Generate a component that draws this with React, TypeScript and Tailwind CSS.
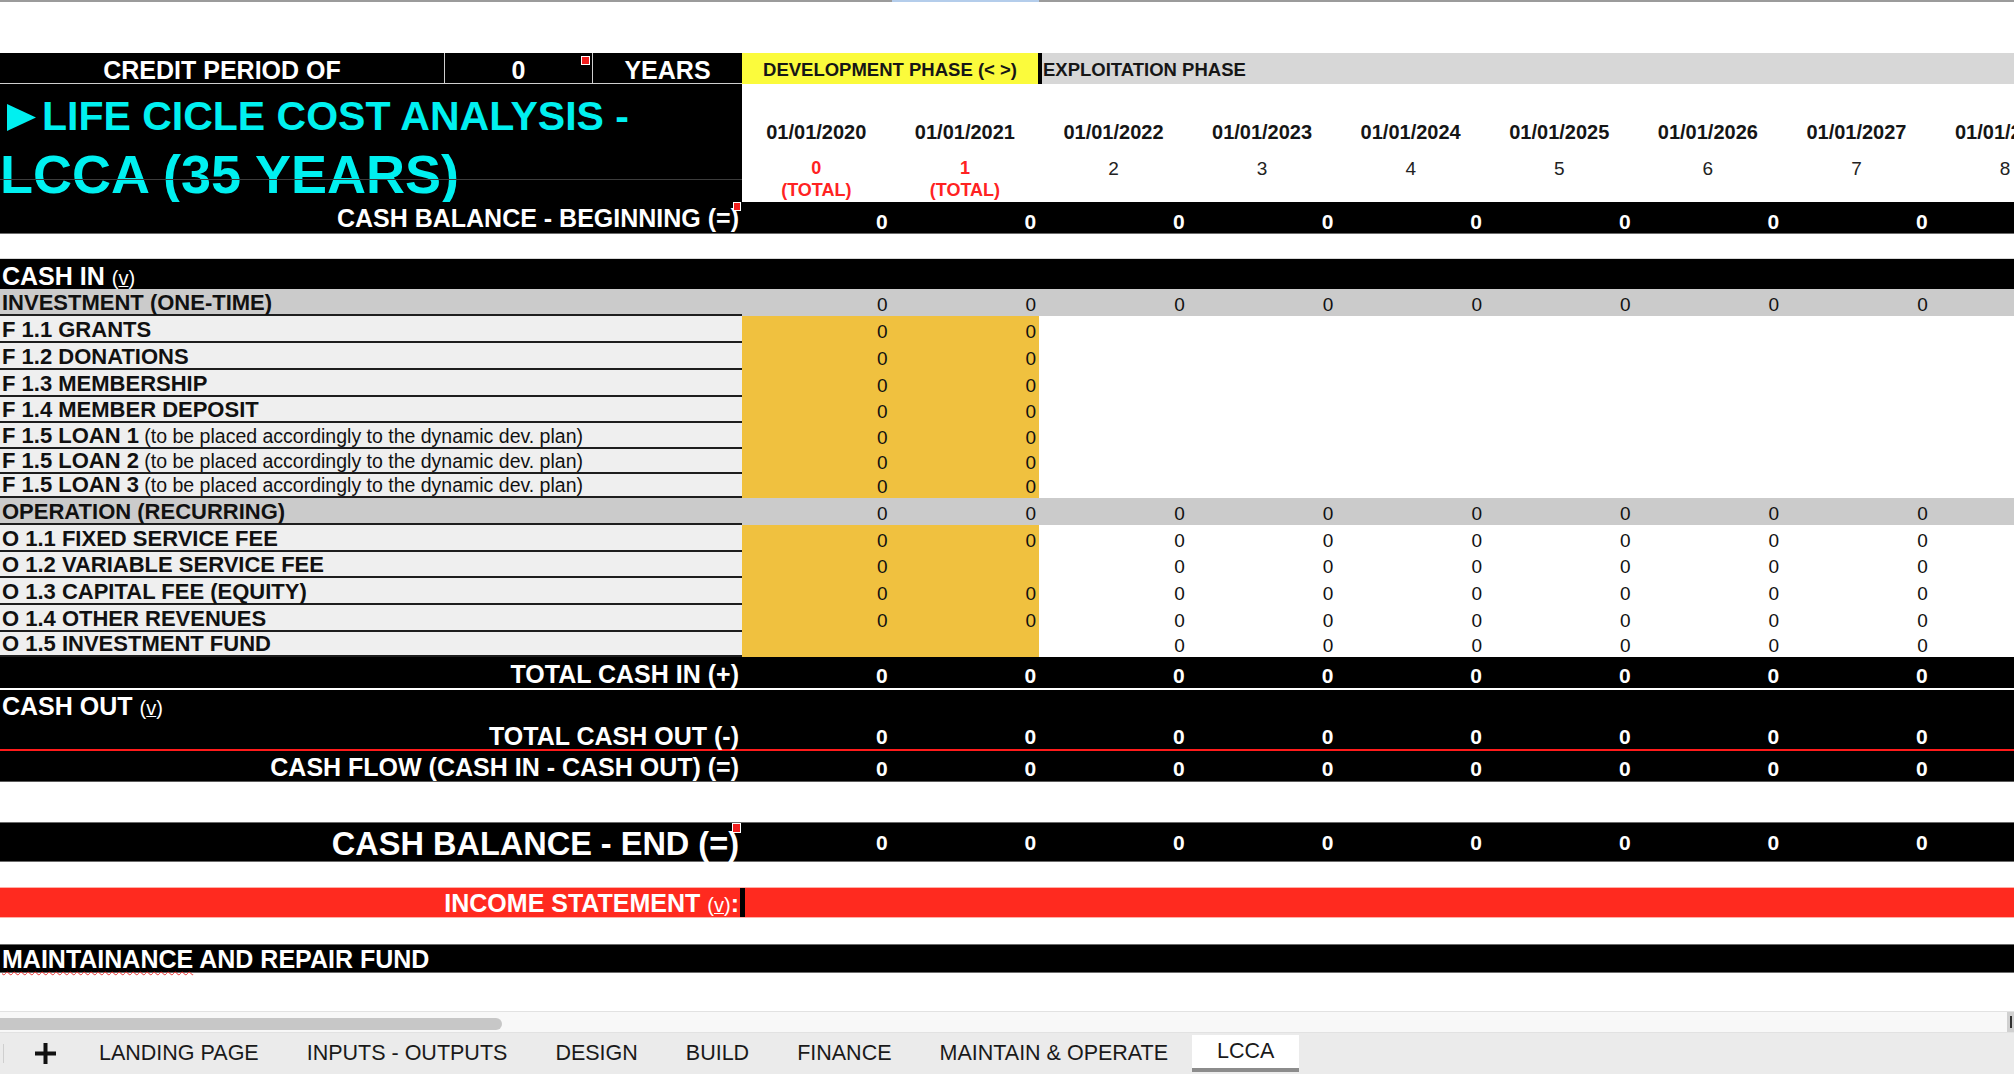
import React from 'react';
import clsx from 'clsx';

type Cell = string | null;

const dates = [
  '01/01/2020',
  '01/01/2021',
  '01/01/2022',
  '01/01/2023',
  '01/01/2024',
  '01/01/2025',
  '01/01/2026',
  '01/01/2027',
  '01/01/2028',
];

const all = (v: Cell): Cell[] => Array(9).fill(v);
const ZEROS = all('0');

const fundingRows: { label: string; note?: boolean; h: string }[] = [
  { label: 'F 1.1 GRANTS', h: 'h-[27px]' },
  { label: 'F 1.2 DONATIONS', h: 'h-[27px]' },
  { label: 'F 1.3 MEMBERSHIP', h: 'h-[27px]' },
  { label: 'F 1.4 MEMBER DEPOSIT', h: 'h-[26px]' },
  { label: 'F 1.5 LOAN 1', note: true, h: 'h-[26px]' },
  { label: 'F 1.5 LOAN 2', note: true, h: 'h-[25px]' },
  { label: 'F 1.5 LOAN 3', note: true, h: 'h-[24px]' },
];

const operationRows: { label: string; values: Cell[]; h: string }[] = [
  { label: 'O 1.1 FIXED SERVICE FEE', values: ZEROS, h: 'h-[27px]' },
  { label: 'O 1.2 VARIABLE SERVICE FEE', values: ['0', null, ...all('0').slice(2)], h: 'h-[26px]' },
  { label: 'O 1.3 CAPITAL FEE (EQUITY)', values: ZEROS, h: 'h-[27px]' },
  { label: 'O 1.4 OTHER REVENUES', values: ZEROS, h: 'h-[27px]' },
  { label: 'O 1.5 INVESTMENT FUND', values: [null, null, ...all('0').slice(2)], h: 'h-[25px]' },
];

const tabs = ['LANDING PAGE', 'INPUTS - OUTPUTS', 'DESIGN', 'BUILD', 'FINANCE', 'MAINTAIN & OPERATE'];

function Marker({ className }: { className: string }) {
  return <span className={clsx('absolute bg-[#f01d1d] ring-1 ring-white', className)} />;
}

function Toggle() {
  return (
    <span className="ml-[7px] text-[20px] font-normal">
      (<span className="underline decoration-1 underline-offset-[1px]">v</span>)
    </span>
  );
}

// white bold values inside the black summary rows
function DarkValues({ pb }: { pb: string }) {
  return (
    <>
      {ZEROS.map((v, i) => (
        <div key={i} className={clsx('w-[148.6px] shrink-0 pr-[3px] text-right text-[21px] font-bold leading-none', pb)}>
          {v}
        </div>
      ))}
    </>
  );
}

function LightRow({
  label,
  values,
  h,
  gold,
  gray,
  note,
}: {
  label: string;
  values: Cell[];
  h: string;
  gold?: boolean;
  gray?: boolean;
  note?: boolean;
}) {
  return (
    <div className={clsx('flex text-[#111]', h, gray && 'bg-[#cbcbcb]')}>
      <div
        className={clsx(
          'flex w-[742px] shrink-0 items-end border-b-2 border-[#1e1e1e] pl-[2px] leading-none',
          !gray && 'bg-[#efefef]'
        )}
      >
        <span className="text-[22px] font-bold">
          {label}
          {note && (
            <span className="text-[19.5px] font-normal"> (to be placed accordingly to the dynamic dev. plan)</span>
          )}
        </span>
      </div>
      {values.map((v, i) => (
        <div
          key={i}
          className={clsx(
            'flex w-[148.6px] shrink-0 items-end justify-end pb-[2px] pr-[3px] text-[19px] leading-none',
            gold && i < 2 && 'bg-[#f0c13f]'
          )}
        >
          {v}
        </div>
      ))}
    </div>
  );
}

export default function App() {
  return (
    <div className="flex h-[1074px] w-[2014px] flex-col overflow-hidden bg-white font-['Liberation_Sans',Arial,sans-serif]">
      {/* top edge of the window */}
      <div className="flex h-[2px] shrink-0">
        <div className="w-[892px] bg-[#9b9b9b]" />
        <div className="w-[147px] bg-[#b4cdeb]" />
        <div className="flex-1 bg-[#9b9b9b]" />
      </div>
      <div className="h-[51px] shrink-0" />

      {/* credit period / phases */}
      <div className="flex h-[31px] shrink-0">
        <div className="flex w-[445px] items-center justify-center border-b border-r border-[#cfcfcf] bg-black pt-[5px] text-[25px] font-bold leading-none text-white">
          CREDIT PERIOD OF
        </div>
        <div className="relative flex w-[148px] items-center justify-center border-b border-r border-[#cfcfcf] bg-black pt-[5px] text-[25px] font-bold leading-none text-white">
          0
          <Marker className="right-[3px] top-[4px] h-[7px] w-[7px]" />
        </div>
        <div className="flex w-[149px] items-center justify-center border-b border-[#cfcfcf] bg-black pt-[5px] text-[25px] font-bold leading-none text-white">
          YEARS
        </div>
        <div className="flex w-[296px] items-center justify-center bg-[#fbfb3c] pt-[4px] text-[18.5px] font-bold leading-none text-[#161616]">
          DEVELOPMENT PHASE (&lt; &gt;)
        </div>
        <div className="w-[4px] bg-black" />
        <div className="flex flex-1 items-center bg-[#d7d7d7] pl-[1px] pt-[4px] text-[18.5px] font-bold leading-none text-[#161616]">
          EXPLOITATION PHASE
        </div>
      </div>

      {/* title + dates */}
      <div className="flex h-[118px] shrink-0">
        <div className="flex w-[742px] shrink-0 flex-col bg-black text-[#00f0f0]">
          <div className="h-[95px] font-bold leading-none">
            <div className="mt-[12px] flex items-end text-[41px]">
              <svg width="29" height="27" viewBox="0 0 29 27" className="mb-[6px] ml-[7px] shrink-0">
                <polygon points="0,0 29,13.5 0,27" fill="#00f0f0" />
              </svg>
              <span className="ml-[6px]">LIFE CICLE COST ANALYSIS -</span>
            </div>
            <div className="mt-[10px] text-[54px]">LCCA (35 YEARS)</div>
          </div>
          <div className="flex-1 border-t border-[#3c3c3c]" />
        </div>
        {dates.map((d, i) => (
          <div key={d} className="flex w-[148.6px] shrink-0 flex-col items-center pt-[38px] leading-none">
            <div className="text-[20px] font-bold text-[#151515]">{d}</div>
            {i < 2 ? (
              <>
                <div className="mt-[17px] text-[18px] font-bold text-[#f22]">{i}</div>
                <div className="mt-[4px] text-[18px] font-bold text-[#f22]">(TOTAL)</div>
              </>
            ) : (
              <div className="mt-[17px] text-[19px] text-[#222]">{i}</div>
            )}
          </div>
        ))}
      </div>

      {/* cash balance beginning */}
      <div className="flex h-[32px] shrink-0 items-end border-b border-[#6b6b6b] bg-black text-white">
        <div className="relative flex w-[742px] shrink-0 items-end justify-end self-stretch pb-[2px] pr-[3px] text-[25px] font-bold leading-none">
          CASH BALANCE - BEGINNING (=)
          <Marker className="right-[2px] top-[1px] h-[7px] w-[6px]" />
        </div>
        <DarkValues pb="pb-[1px]" />
      </div>
      <div className="h-[25px] shrink-0 border-b border-[#d8d8d8]" />

      {/* cash in */}
      <div className="flex h-[30px] shrink-0 items-end bg-black pl-[2px] text-white">
        <span className="text-[25px] font-bold leading-none">
          CASH IN
          <Toggle />
        </span>
      </div>
      <LightRow label="INVESTMENT (ONE-TIME)" values={ZEROS} h="h-[27px]" gray />
      {fundingRows.map((r) => (
        <LightRow key={r.label} label={r.label} note={r.note} h={r.h} values={['0', '0', ...all(null).slice(2)]} gold />
      ))}
      <LightRow label="OPERATION (RECURRING)" values={ZEROS} h="h-[27px]" gray />
      {operationRows.map((r) => (
        <LightRow key={r.label} label={r.label} values={r.values} h={r.h} gold />
      ))}

      {/* totals */}
      <div className="flex h-[33px] shrink-0 items-end border-b-2 border-white bg-black text-white">
        <div className="w-[742px] shrink-0 pb-[1px] pr-[3px] text-right text-[25px] font-bold leading-none">
          TOTAL CASH IN (+)
        </div>
        <DarkValues pb="pb-[2px]" />
      </div>
      <div className="flex h-[61px] shrink-0 flex-col border-b-2 border-[#ff1a1a] bg-black text-white">
        <div className="flex h-[30px] items-end pb-[1px] pl-[2px]">
          <span className="text-[25px] font-bold leading-none">
            CASH OUT
            <Toggle />
          </span>
        </div>
        <div className="flex flex-1 items-end">
          <div className="w-[742px] shrink-0 pr-[3px] text-right text-[25px] font-bold leading-none">TOTAL CASH OUT (-)</div>
          <DarkValues pb="pb-[2px]" />
        </div>
      </div>
      <div className="flex h-[31px] shrink-0 items-end border-b border-[#5a5a5a] bg-black text-white">
        <div className="w-[742px] shrink-0 pb-[1px] pr-[3px] text-right text-[25px] font-bold leading-none">
          CASH FLOW (CASH IN - CASH OUT) (=)
        </div>
        <DarkValues pb="pb-[2px]" />
      </div>
      <div className="h-[40px] shrink-0" />

      {/* cash balance end */}
      <div className="flex h-[40px] shrink-0 items-end border-y border-[#6b6b6b] bg-black text-white">
        <div className="relative flex w-[742px] shrink-0 items-end justify-end self-stretch pb-[1px] pr-[3px] text-[32.5px] font-bold leading-none">
          CASH BALANCE - END (=)
          <Marker className="right-[2px] top-[1px] h-[8px] w-[7px]" />
        </div>
        <DarkValues pb="pb-[8px]" />
      </div>
      <div className="h-[25px] shrink-0" />

      {/* income statement */}
      <div className="flex h-[31px] shrink-0 border-y border-[#ffb0a8] bg-[#ff2a1f] text-white">
        <div className="flex w-[740px] shrink-0 items-end justify-end pb-[1px] pr-[1px] text-[25px] font-bold leading-none">
          <span>
            INCOME STATEMENT
            <Toggle />:
          </span>
        </div>
        <div className="w-[5px] bg-black" />
      </div>
      <div className="h-[26px] shrink-0" />

      <div className="flex h-[29px] shrink-0 items-end border-y border-[#6b6b6b] bg-black pl-[2px] text-white">
        <span className="text-[25px] font-bold leading-none">
          <span className="underline decoration-[#e33] decoration-wavy decoration-1 underline-offset-[3px]">MAINTAINANCE</span>{' '}
          AND REPAIR FUND
        </span>
      </div>
      <div className="flex-1" />

      {/* horizontal scrollbar */}
      <div className="flex h-[22px] shrink-0 items-start border-y border-[#e2e2e2] bg-[#f8f8f8] pt-[6px]">
        <div className="h-[12px] w-[502px] rounded-r-full bg-[#c7c7c7]" />
        <div className="-mt-[6px] ml-auto flex h-[20px] w-[7px] items-center justify-center bg-[#d0d0d0]">
          <div className="h-[12px] w-[2px] bg-[#333]" />
        </div>
      </div>

      {/* sheet tabs */}
      <div className="flex h-[41px] shrink-0 items-stretch bg-[#ebebeb] text-[21.5px] text-[#1a1a1a]">
        <div className="my-[11px] w-[4px] border-r border-[#cfcfcf]" />
        <div className="flex w-[71px] items-center pl-[29px]">
          <svg width="25" height="25" viewBox="0 0 25 25">
            <path d="M12.5 2v21M2 12.5h21" stroke="#111" strokeWidth="4" />
          </svg>
        </div>
        {tabs.map((t) => (
          <div key={t} className="flex items-center px-[24px] leading-none">
            {t}
          </div>
        ))}
        <div className="my-[2px] flex items-center border-b-4 border-[#8c8c8c] bg-white px-[25px] leading-none">LCCA</div>
      </div>
    </div>
  );
}
